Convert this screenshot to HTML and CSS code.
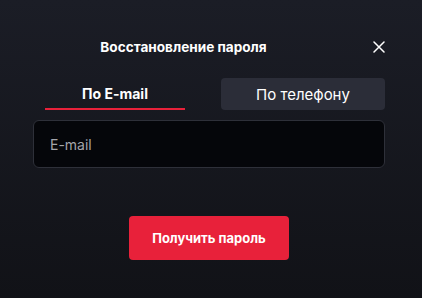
FILE: index.html
```html
<!DOCTYPE html>
<html lang="ru">
<head>
  <meta charset="UTF-8">
  <title>Восстановление пароля</title>
  <link rel="stylesheet" href="styles.css">
</head>
<body>

<div class="modal">
  <div class="modal-head">
    <h2>Восстановление пароля</h2>
    <button class="close-btn" aria-label="Закрыть">
      <svg width="12" height="12" viewBox="0 0 12 12">
        <path d="M1 1 L11 11 M11 1 L1 11" stroke="#fff" stroke-width="1.5" stroke-linecap="round"/>
      </svg>
    </button>
  </div>

  <div class="tabs">
    <button class="tab active">По E-mail</button>
    <button class="tab">По телефону</button>
  </div>

  <input class="field" type="email" placeholder="E-mail">

  <div class="actions">
    <button class="submit">Получить пароль</button>
  </div>
</div>

</body>
</html>
```

FILE: styles.css
```css
* {
  box-sizing: border-box;
}

body {
  margin: 0;
  font-family: Inter, 'Noto Sans', sans-serif;
  background: #15161c;
}

.modal {
  width: 422px;
  height: 298px;
  padding: 36px 37px 0 33px;
  background: linear-gradient(180deg, #1b1d26 0%, #111217 100%);
  color: #fff;
}

.modal-head {
  display: flex;
  align-items: center;
  height: 22px;
}

.modal-head h2 {
  flex: 1;
  margin: 0;
  padding-left: 6px;
  padding-right: 40px;
  text-align: center;
  font-size: 13.6px;
  font-weight: 700;
}

.close-btn {
  width: 22px;
  height: 22px;
  margin-right: -5px;
  padding: 0;
  background: none;
  border: none;
  display: flex;
  align-items: center;
  justify-content: center;
  cursor: pointer;
}

.tabs {
  display: flex;
  gap: 36px;
  margin-top: 20px;
  padding-left: 12px;
}

.tab {
  height: 32px;
  border: none;
  border-radius: 4px;
  background: #2b2d38;
  color: #fff;
  font-family: inherit;
  font-size: 15px;
  cursor: pointer;
}

.tab:first-child {
  width: 140px;
}

.tab:last-child {
  flex: 1;
}

.tab.active {
  background: none;
  border-radius: 0;
  border-bottom: 2px solid #e8213a;
  font-size: 14px;
  font-weight: 700;
}

.field {
  display: block;
  width: 100%;
  height: 48px;
  margin-top: 10px;
  padding: 0 16px;
  background: #05060a;
  border: 1px solid #2e3039;
  border-radius: 6px;
  color: #fff;
  font-family: inherit;
  font-size: 14px;
}

.field::placeholder {
  color: #a4a5aa;
}

.actions {
  display: flex;
  justify-content: center;
  margin-top: 48px;
}

.submit {
  width: 160px;
  height: 44px;
  border: none;
  border-radius: 4px;
  background: #e8213a;
  color: #fff;
  font-family: inherit;
  font-size: 13px;
  font-weight: 700;
  cursor: pointer;
}
```
